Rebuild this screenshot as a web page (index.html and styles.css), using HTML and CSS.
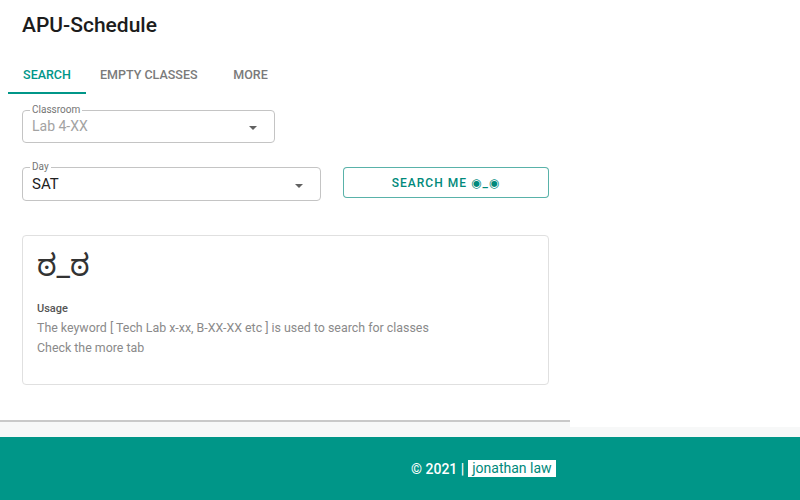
FILE: index.html
```html
<!DOCTYPE html>
<html lang="en">
<head>
<meta charset="utf-8">
<title>APU-Schedule</title>
<link rel="stylesheet" href="styles.css">
</head>
<body>
<div class="top">
  <main class="panel">
    <h1 class="title">APU-Schedule</h1>
    <nav class="tabs">
      <a class="tab active">Search</a>
      <a class="tab">Empty Classes</a>
      <a class="tab">More</a>
    </nav>
    <div class="form">
      <fieldset class="field field-room">
        <legend>Classroom</legend>
        <span class="value placeholder">Lab 4-XX</span>
        <span class="arrow"></span>
      </fieldset>
      <div class="row">
        <fieldset class="field field-day">
          <legend>Day</legend>
          <span class="value">SAT</span>
          <span class="arrow"></span>
        </fieldset>
        <button class="search-btn">Search me ◉_◉</button>
      </div>
      <section class="card">
        <div class="face">ಠ_ಠ</div>
        <h2 class="usage">Usage</h2>
        <p class="desc">The keyword [ Tech Lab x-xx, B-XX-XX etc ] is used to search for classes</p>
        <p class="desc">Check the more tab</p>
      </section>
    </div>
  </main>
  <div class="rest"></div>
</div>
<footer class="footer">
  <span class="copy">© 2021 |</span>
  <a class="author">jonathan law</a>
</footer>
</body>
</html>
```

FILE: styles.css
```css
* { box-sizing: border-box; }
html, body { margin: 0; padding: 0; }
body {
  font-family: Roboto, "Noto Sans", "Noto Sans Kannada", "DejaVu Sans", sans-serif;
  background: #f7f8f8;
  width: 800px;
  height: 500px;
  overflow: hidden;
  color: #212121;
}
.top {
  display: flex;
  align-items: flex-start;
}
.panel {
  width: 570px;
  height: 422px;
  background: #fff;
  border-bottom: 2px solid #c9c9c9;
}
.rest {
  flex: 1;
  height: 427px;
  background: #fff;
}
.title {
  margin: 13px 0 0 22px;
  font-size: 21px;
  line-height: 24px;
  font-weight: 500;
  color: #1c1c1c;
}
.tabs {
  display: flex;
  margin: 15px 0 0 8px;
}
.tab {
  min-width: 78px;
  padding: 14px 14px 9px;
  text-align: center;
  font-size: 12.5px;
  line-height: 17px;
  font-weight: 500;
  text-transform: uppercase;
  color: #7a7a7a;
  border-bottom: 2px solid transparent;
}
.tab.active {
  color: #009688;
  border-bottom-color: #009688;
}
.form {
  padding: 10px 0 0 22px;
}
.field {
  position: relative;
  margin: 0;
  border: 1px solid #c4c4c4;
  border-radius: 4px;
  padding: 2px 30px 8px 9px;
  min-width: 0;
}
.field legend {
  font-size: 10px;
  line-height: 12px;
  color: #757575;
  padding: 0 2px;
  margin-left: -2px;
}
.field-room { width: 253px; }
.field-day { width: 299px; }
.value {
  display: block;
  font-size: 14px;
  line-height: 16px;
  color: #212121;
}
.value.placeholder { color: #a3a3a3; }
.field-day .value {
  font-size: 15px;
  padding-top: 1px;
}
.arrow {
  position: absolute;
  right: 17px;
  top: 10px;
  width: 0;
  height: 0;
  border-left: 4px solid transparent;
  border-right: 4px solid transparent;
  border-top: 4px solid #616161;
}
.field-day .arrow { right: 17px; top: 11px; }
.row {
  display: flex;
  align-items: flex-start;
  gap: 22px;
  margin-top: 18px;
}
.search-btn {
  margin-top: 6px;
  width: 206px;
  height: 31px;
  background: #fff;
  border: 1px solid rgba(0, 137, 123, 0.65);
  border-radius: 4px;
  font-family: inherit;
  font-size: 12px;
  font-weight: 500;
  letter-spacing: 1px;
  text-transform: uppercase;
  color: #00897b;
}
.card {
  width: 527px;
  height: 150px;
  margin-top: 34px;
  border: 1px solid #e0e0e0;
  border-radius: 4px;
  padding: 12px 14px;
}
.face {
  font-size: 30px;
  line-height: 36px;
  color: #333;
}
.usage {
  margin: 18px 0 0;
  font-size: 11px;
  line-height: 14px;
  font-weight: 500;
  color: #555;
}
.desc {
  margin: 4px 0 0;
  font-size: 12.4px;
  line-height: 15.5px;
  color: #8a8a8a;
}
.footer {
  margin-top: 10px;
  height: 63px;
  background: #009688;
  display: flex;
  align-items: center;
  padding-left: 411px;
  gap: 4px;
}
.copy {
  color: #fff;
  font-size: 14px;
  font-weight: 500;
}
.author {
  background: #fff;
  color: #00897b;
  font-size: 14px;
  line-height: 17px;
  padding: 0 4px;
}
```
